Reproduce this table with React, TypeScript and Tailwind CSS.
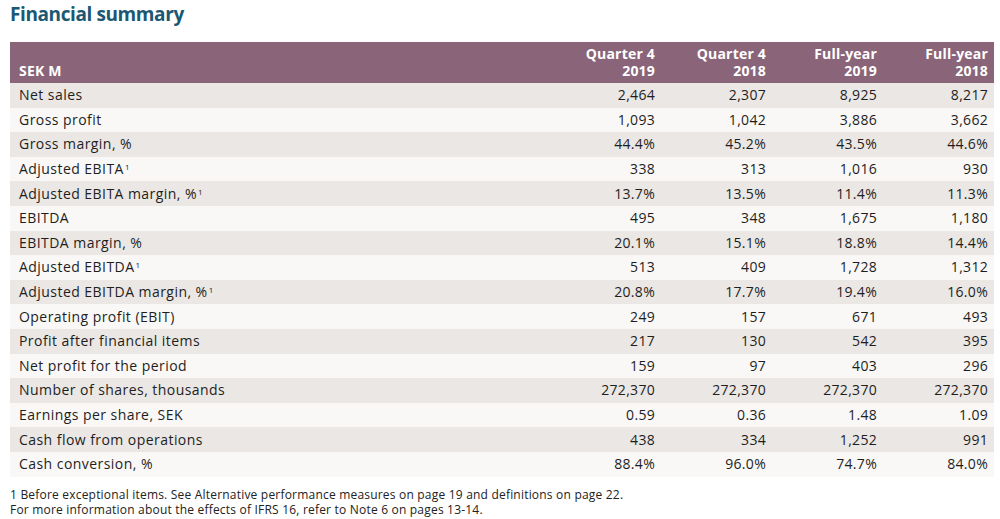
const rows: [string, string[], boolean?][] = [
  ["Net sales", ["2,464", "2,307", "8,925", "8,217"]],
  ["Gross profit", ["1,093", "1,042", "3,886", "3,662"]],
  ["Gross margin, %", ["44.4%", "45.2%", "43.5%", "44.6%"]],
  ["Adjusted EBITA", ["338", "313", "1,016", "930"], true],
  ["Adjusted EBITA margin, %", ["13.7%", "13.5%", "11.4%", "11.3%"], true],
  ["EBITDA", ["495", "348", "1,675", "1,180"]],
  ["EBITDA margin, %", ["20.1%", "15.1%", "18.8%", "14.4%"]],
  ["Adjusted EBITDA", ["513", "409", "1,728", "1,312"], true],
  ["Adjusted EBITDA margin, %", ["20.8%", "17.7%", "19.4%", "16.0%"], true],
  ["Operating profit (EBIT)", ["249", "157", "671", "493"]],
  ["Profit after financial items", ["217", "130", "542", "395"]],
  ["Net profit for the period", ["159", "97", "403", "296"]],
  ["Number of shares, thousands", ["272,370", "272,370", "272,370", "272,370"]],
  ["Earnings per share, SEK", ["0.59", "0.36", "1.48", "1.09"]],
  ["Cash flow from operations", ["438", "334", "1,252", "991"]],
  ["Cash conversion, %", ["88.4%", "96.0%", "74.7%", "84.0%"]],
];

const heads = [
  ["Quarter 4", "2019"],
  ["Quarter 4", "2018"],
  ["Full-year", "2019"],
  ["Full-year", "2018"],
];

export default function App() {
  return (
    <div className="w-[1000px] h-[519px] bg-white text-[#1e1e1e] font-['Open_Sans',sans-serif] overflow-hidden">
      {/* Title */}
      <h1 className="pl-[10px] pt-[1px] h-[42px] text-[19px] font-bold text-[#1b5873] leading-[26px] tracking-[-0.4px]">
        Financial summary
      </h1>

      {/* Table */}
      <div className="ml-[10px] w-[984px]">
        <div className="grid grid-cols-[540px_111px_111px_111px_111px] bg-[#8a6479] text-white font-bold text-[14px] leading-[17px] h-[41px] tracking-[0.2px]">
          <div className="flex items-end pl-[9px] pb-[4px]">SEK M</div>
          {heads.map((h, i) => (
            <div key={i} className="flex flex-col items-end justify-end pr-[6px] pb-[4px]">
              <span>{h[0]}</span>
              <span>{h[1]}</span>
            </div>
          ))}
        </div>
        {rows.map(([label, vals, sup], i) => (
          <div
            key={label}
            className={`grid grid-cols-[540px_111px_111px_111px_111px] h-[24.6px] items-center text-[14px] leading-[16px] ${
              i % 2 === 0 ? "bg-[#ebe7e4]" : "bg-[#f9f8f7]"
            }`}
          >
            <div className="pl-[9px] tracking-[0.45px]">
              {label}
              {sup && <sup className="text-[8px] ml-[1px]">1</sup>}
            </div>
            {vals.map((v, j) => (
              <div key={j} className="text-right pr-[6px] tracking-[0.3px]">
                {v}
              </div>
            ))}
          </div>
        ))}
      </div>

      {/* Footnote */}
      <div className="pl-[10px] pt-[10px] text-[12px] leading-[15px] text-[#222] tracking-[0.2px]">
        <p>1 Before exceptional items. See Alternative performance measures on page 19 and definitions on page 22.</p>
        <p>For more information about the effects of IFRS 16, refer to Note 6 on pages 13-14.</p>
      </div>
    </div>
  );
}
